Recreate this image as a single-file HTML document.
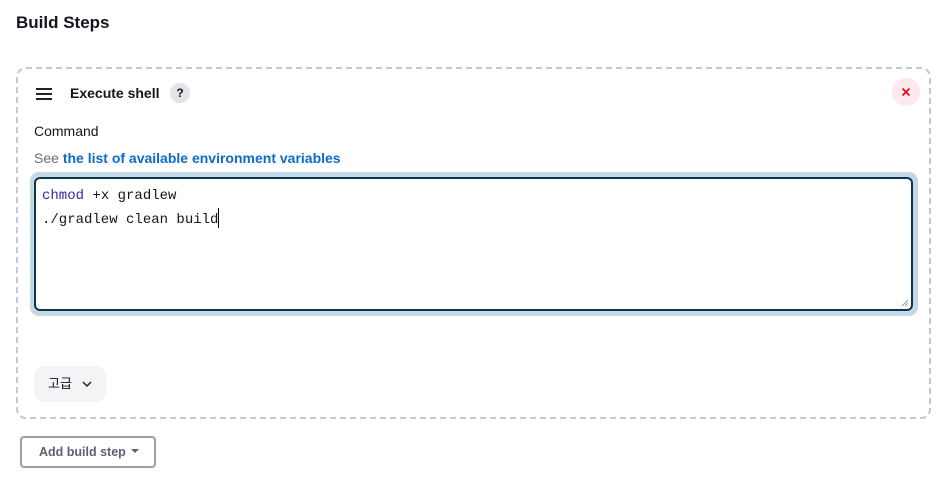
<!DOCTYPE html>
<html><head><meta charset="utf-8"><style>
*{box-sizing:border-box;margin:0;padding:0}
body{width:945px;height:482px;background:#fff;font-family:"Liberation Sans","Noto Sans CJK KR",sans-serif;color:#14141f;position:relative;overflow:hidden}
.abs{position:absolute}
h1{position:absolute;left:16px;top:13px;font-size:17px;font-weight:bold;color:#14141f}
.box{left:16px;top:67px;width:915px;height:352px;border:2px dashed #c3c9ce;border-radius:10px}
.ham{left:36px;top:88px;width:16px}
.ham i{display:block;height:1.6px;background:#222;margin-bottom:3.4px}
.t{left:70px;top:85px;font-size:14px;font-weight:bold}
.q{left:170px;top:83px;width:20px;height:20px;border-radius:50%;background:#e4e4e8;font-size:12px;font-weight:bold;text-align:center;line-height:20px}
.x{left:892px;top:78px;width:28px;height:28px;border-radius:50%;background:#fde9eb}
.lbl{left:34px;top:123px;font-size:14px}
.see{left:34px;top:150px;font-size:14px;color:#6b6b78}
.see b{color:#0b6bcb}
.ring{left:30px;top:172px;width:888px;height:144px;border-radius:9px;background:#c5d8e6}
.ta{left:34px;top:177px;width:879px;height:134px;border:2px solid #0e3550;border-radius:6px;background:#fff;font-family:"Liberation Mono",monospace;font-size:14px;line-height:24px;padding:5px 6px}
.ta span{color:#3c1ea8}
.cur{display:inline-block;width:1px;height:20px;background:#000;vertical-align:-5px}
.adv{left:34px;top:366px;width:72px;height:36px;border-radius:10px;background:#f4f4f7;font-size:13px;line-height:36px;padding-left:14px}
.add{left:20px;top:436px;width:136px;height:32px;border:2px solid #9aa1a8;border-radius:4px;font-size:12.5px;font-weight:bold;color:#5d5f73;line-height:28px;padding-left:17px}
</style></head><body>
<h1>Build Steps</h1>
<div class="abs box"></div>
<div class="abs ham"><i></i><i></i><i></i></div>
<div class="abs t">Execute shell</div>
<div class="abs q">?</div>
<div class="abs x"><svg width="28" height="28"><path d="M10.5 10.5l7 7M17.5 10.5l-7 7" stroke="#e6001f" stroke-width="1.6"/></svg></div>
<div class="abs lbl">Command</div>
<div class="abs see">See <b>the list of available environment variables</b></div>
<div class="abs ring"></div>
<div class="abs ta"><span>chmod</span> +x gradlew<br>./gradlew clean build<i class="cur"></i>
<svg class="abs" style="right:2px;bottom:2px" width="8" height="8"><path d="M1 7L7 1M4 7L7 4" stroke="#999" stroke-width="1"/></svg></div>
<div class="abs adv">고급 <svg width="10" height="8" style="margin-left:6px"><path d="M1 2l4 4 4-4" stroke="#222" stroke-width="1.5" fill="none"/></svg></div>
<div class="abs add">Add build step <svg width="8" height="5" style="margin-left:2px;vertical-align:2px"><path d="M0 0h8L4 4z" fill="#5d5f73"/></svg></div>
</body></html>
